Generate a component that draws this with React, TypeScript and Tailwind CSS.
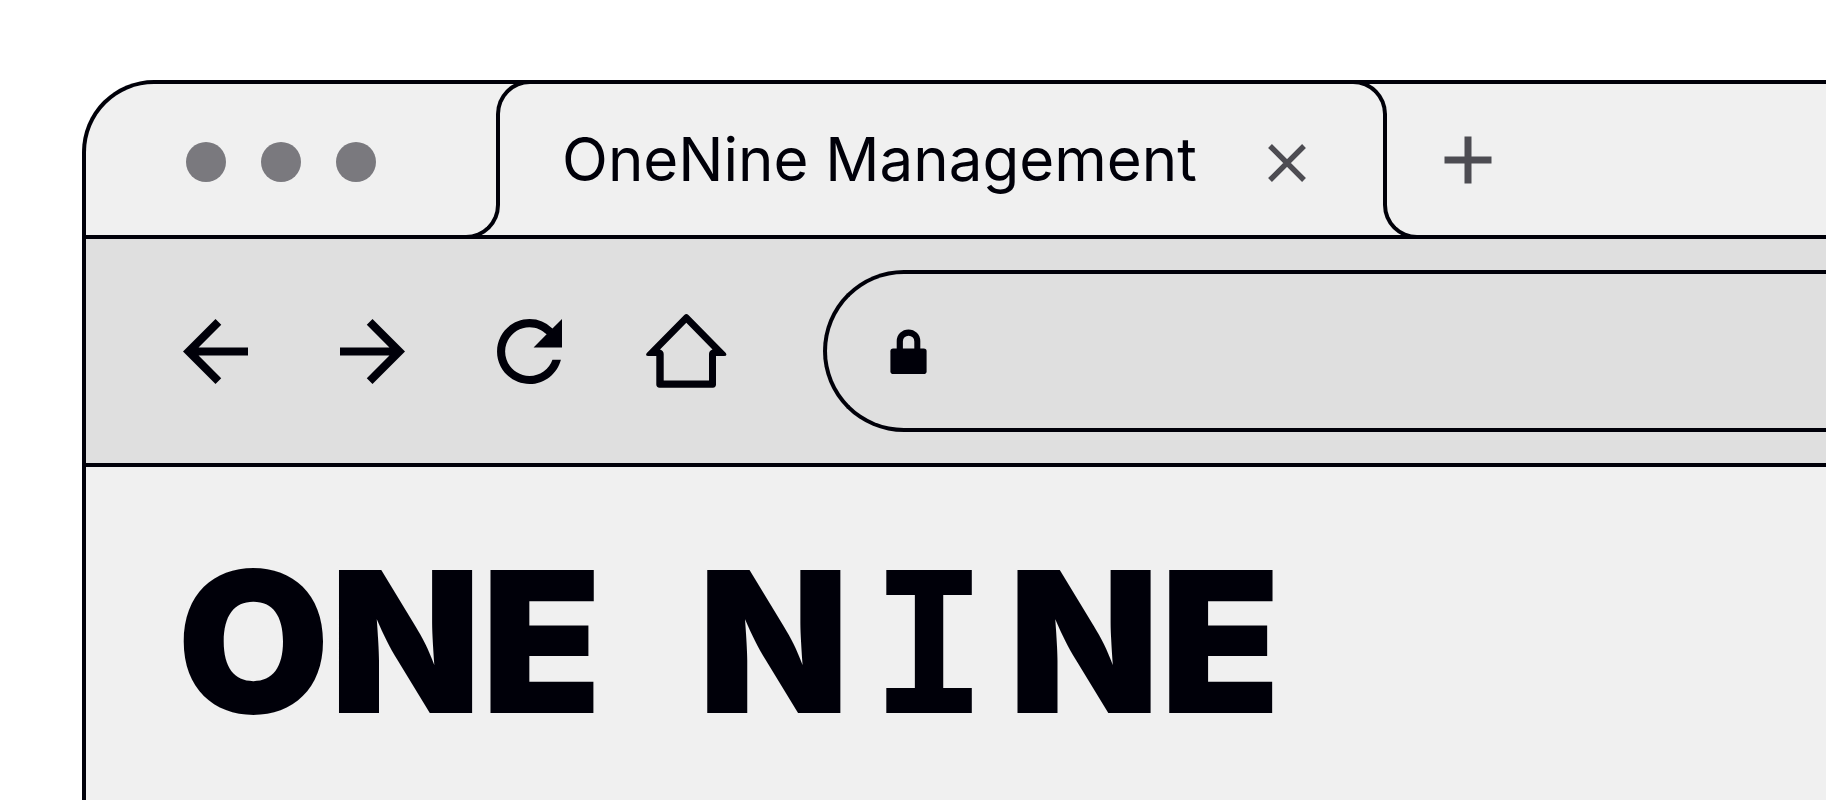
import type { ReactNode } from "react";

function NavButton({ label, children }: { label: string; children: ReactNode }) {
  return (
    <button type="button" aria-label={label} className="flex w-[81px] shrink-0 items-center justify-center">
      {children}
    </button>
  );
}

function TabStrip() {
  return (
    <div className="flex h-[155px] border-b-4 border-[#000009] pl-[100px]">
      <div className="mt-1 flex shrink-0 items-center gap-[35px] pr-[90px]">
        <span className="size-10 rounded-full bg-[#7a797e]" />
        <span className="size-10 rounded-full bg-[#7a797e]" />
        <span className="size-10 rounded-full bg-[#7a797e]" />
      </div>

      {/* Active tab: each side is a flared foot joined to a rounded cap */}
      <div className="-my-1 flex shrink-0">
        <span className="-mr-1 h-20 w-[34px] self-end rounded-br-[34px] border-r-4 border-b-4 border-[#000009]" />
        <span className="h-20 w-[34px] rounded-tl-[34px] border-t-4 border-l-4 border-[#000009]" />
        <div className="flex items-center pr-[42px] pb-0.5 pl-8">
          <span className="font-[Inter,sans-serif] text-[60px] leading-none whitespace-nowrap">OneNine Management</span>
          <button type="button" aria-label="Close tab" className="mt-2 ml-[66px] flex size-12 items-center justify-center">
            <svg viewBox="0 0 38 38" className="size-[38px]" fill="none" stroke="#4d4c52" strokeWidth="5.4">
              <path d="M2 2 36 36M36 2 2 36" />
            </svg>
          </button>
        </div>
        <span className="h-20 w-[34px] rounded-tr-[34px] border-t-4 border-r-4 border-[#000009]" />
        <span className="-ml-1 h-20 w-[34px] self-end rounded-bl-[34px] border-b-4 border-l-4 border-[#000009]" />
      </div>

      <button type="button" aria-label="New tab" className="ml-[27px] flex shrink-0 items-center">
        <svg viewBox="0 0 48 48" className="size-12" fill="none" stroke="#4d4c52" strokeWidth="7">
          <path d="M24 .5v47M.5 24h47" />
        </svg>
      </button>
    </div>
  );
}

function Toolbar() {
  return (
    <div className="flex border-b-4 border-[#000009] bg-[#dfdfdf] py-[31px] pl-[89px]">
      <nav aria-label="Page navigation" className="flex shrink-0 gap-[76px]">
        <NavButton label="Back">
          <svg viewBox="4 4 16 16" className="size-[65px]" fill="currentColor">
            <path d="M20 11H7.83l5.59-5.59L12 4l-8 8 8 8 1.41-1.41L7.83 13H20v-2z" />
          </svg>
        </NavButton>
        <NavButton label="Forward">
          <svg viewBox="4 4 16 16" className="size-[65px]" fill="currentColor">
            <path d="m12 4-1.41 1.41L16.17 11H4v2h12.17l-5.58 5.59L12 20l8-8z" />
          </svg>
        </NavButton>
        <NavButton label="Reload">
          <svg viewBox="4 4 16 16" className="size-[65px]" fill="currentColor">
            <path d="M17.65 6.35A7.958 7.958 0 0 0 12 4c-4.42 0-7.99 3.58-7.99 8s3.57 8 7.99 8c3.73 0 6.84-2.55 7.73-6h-2.08A5.99 5.99 0 0 1 12 18c-3.31 0-6-2.69-6-6s2.69-6 6-6c1.66 0 3.14.69 4.22 1.78L13 11h7V4l-2.35 2.35z" />
          </svg>
        </NavButton>
        <NavButton label="Home">
          <svg viewBox="0 0 81 74" className="h-[74px] w-[81px]" fill="currentColor" fillRule="evenodd">
            <path d="M.8 39 38.3 1Q40.4-.8 42.4 1L79.8 39Q81.6 42 78 42H70V70.6Q70 73.7 66.9 73.7H13.6Q10.3 73.7 10.3 70.6V42H2.4Q-1.2 42 .8 39ZM40.3 8.7 14 35.4Q17.7 36.5 17.7 40V66.4H63V40Q63 36.5 66.5 35.4Z" />
          </svg>
        </NavButton>
      </nav>

      <label className="ml-24 flex h-[162px] min-w-0 flex-1 items-center rounded-l-full border-y-4 border-l-4 border-[#000009] pl-[63px]">
        <svg viewBox="0 0 37 45" className="h-[45px] w-[37px] shrink-0" fill="currentColor" aria-hidden="true">
          <rect x=".4" y="19.6" width="36.2" height="25.4" rx="2.8" />
          <path d="M6.7 21V12.2a11.8 11.8 0 0 1 23.6 0V21h-6V12.4a5.7 5.7 0 0 0-11.4 0V21Z" />
        </svg>
        <input
          type="text"
          aria-label="Address"
          className="ml-8 min-w-0 flex-1 bg-transparent font-[Inter,sans-serif] text-[60px] leading-none outline-none"
        />
      </label>
    </div>
  );
}

export default function App() {
  return (
    <div className="flex min-h-screen flex-col overflow-hidden bg-white pt-20 pl-[82px] text-[#000009]">
      <div className="flex flex-1 flex-col overflow-hidden rounded-tl-[72px] border-t-4 border-l-4 border-[#000009] bg-[#f0f0f0]">
        <TabStrip />
        <Toolbar />
        <main className="pt-[76px] pl-[91px]">
          <h1 className="flex gap-24 font-[Inter,sans-serif] text-[197px] leading-none font-black whitespace-nowrap">
            <span>ONE</span>{" "}
            <span>
              N<span className="mx-5 font-['DejaVu_Sans_Mono',monospace] font-bold">I</span>NE
            </span>
          </h1>
        </main>
      </div>
    </div>
  );
}
